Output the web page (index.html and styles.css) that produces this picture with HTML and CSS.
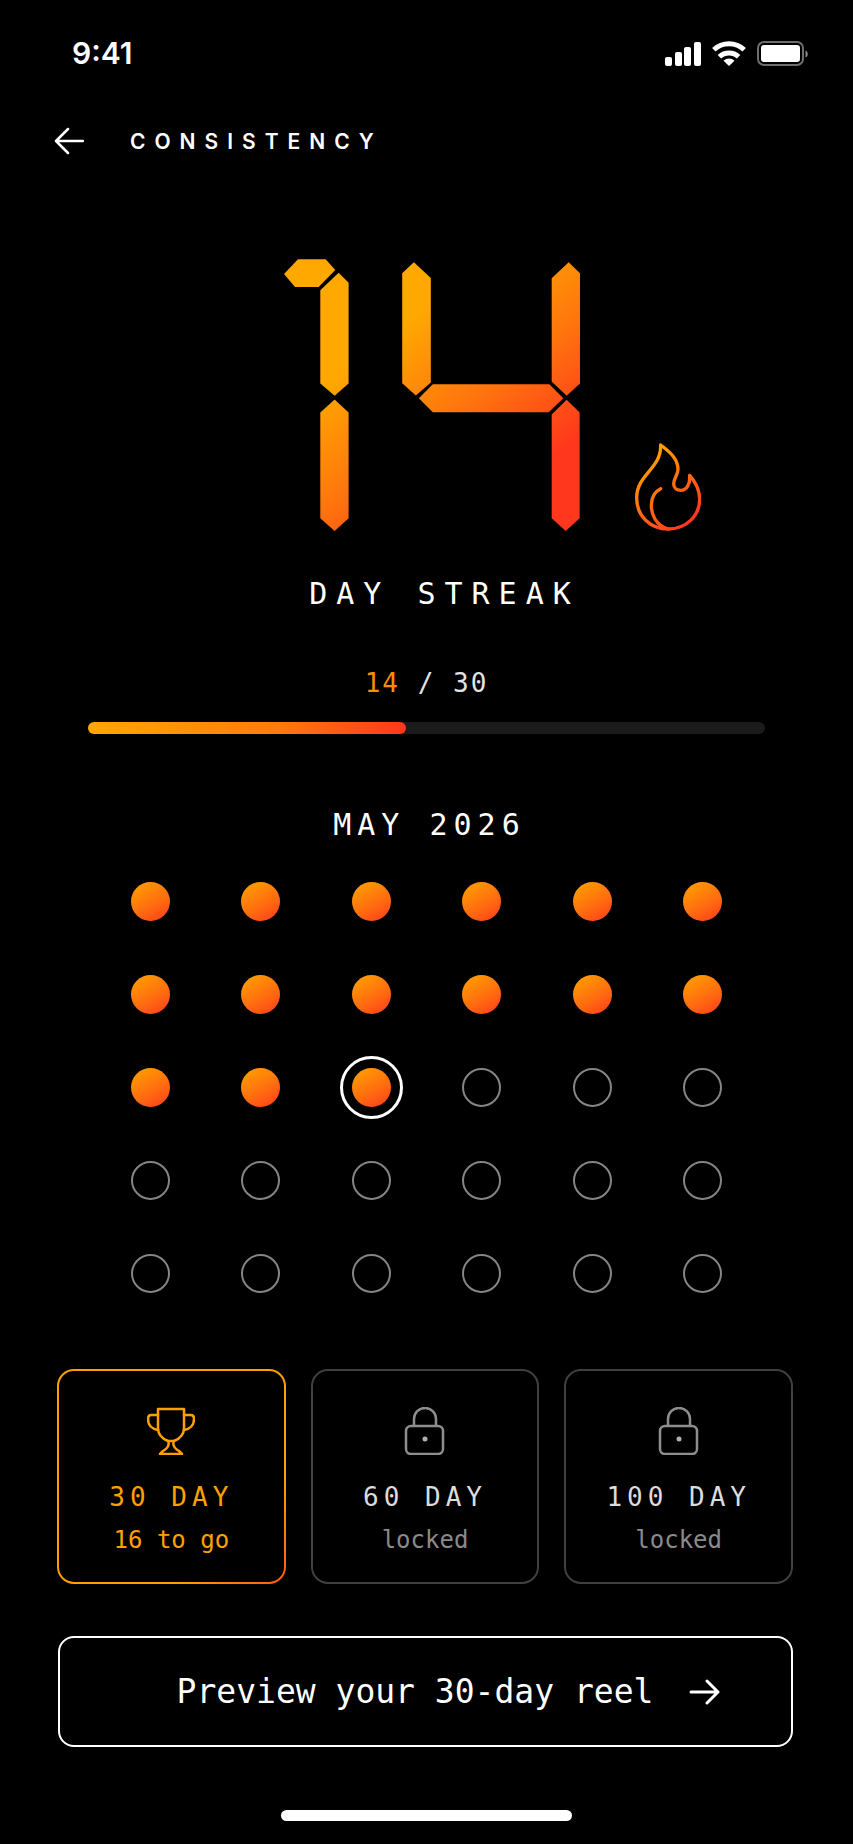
FILE: index.html
```
<!DOCTYPE html>
<html lang="en">
<head>
  <meta charset="UTF-8">
  <meta name="viewport" content="width=device-width, initial-scale=1">
  <title>Consistency</title>
  <link rel="stylesheet" href="styles.css">
</head>
<body>
  <div class="status-bar">
    <span class="status-time">9:41</span>
    <div class="status-icons">
      <svg width="36" height="25" viewBox="0 0 36 25" fill="#fff">
        <rect x="0" y="16" width="7" height="9" rx="2"/>
        <rect x="10" y="11" width="7" height="14" rx="2"/>
        <rect x="19" y="6" width="7" height="19" rx="2"/>
        <rect x="29" y="1" width="7" height="24" rx="2"/>
      </svg>
      <svg width="34" height="25" viewBox="0 0 34 25">
        <g fill="none" stroke="#fff" stroke-width="5">
          <path d="M1.800 8.800A22 22 0 0 1 32.200 8.800"/>
          <path d="M7.400 15.800A14 14 0 0 1 26.600 15.800"/>
        </g>
        <path d="M11.500 19.800a8 8 0 0 1 11 0L17 25z" fill="#fff"/>
      </svg>
      <svg class="battery" width="52" height="25" viewBox="0 0 52 25">
        <rect x="1" y="1" width="45" height="23" rx="6" fill="none" stroke="#6e6e6e" stroke-width="2"/>
        <rect x="4" y="4" width="39" height="17" rx="3" fill="#fff"/>
        <path d="M48.500 9.500c3 1 3 6 0 7z" fill="#8a8a8a"/>
      </svg>
    </div>
  </div>

  <header class="header">
    <button class="back-btn" aria-label="Back">
      <svg width="30" height="28" viewBox="0 0 30 28" fill="none" stroke="#fff" stroke-width="2.500" stroke-linecap="round" stroke-linejoin="round">
        <path d="M29 14H2M14 2L2 14l12 12"/>
      </svg>
    </button>
    <h1 class="title">CONSISTENCY</h1>
  </header>

  <main>
    <section class="hero">
      <svg class="digits" width="296" height="272" viewBox="72 56 889 817" role="img" aria-label="14">
        <defs>
          <linearGradient id="fire" gradientUnits="userSpaceOnUse" x1="330" y1="330" x2="680" y2="800">
            <stop offset="0" stop-color="#ffa800"/>
            <stop offset="0.500" stop-color="#ff760d"/>
            <stop offset="1" stop-color="#ff371c"/>
          </linearGradient>
        </defs>
        <g fill="url(#fire)">
          <path d="M72 101L114 57H197L226 89 176 140H105z"/>
          <path d="M181 150L236 97 266 127V430L224 467 181 430z"/>
          <path d="M181 517L224 478 266 517V835L224 873 181 835z"/>
          <path d="M427 99L462 66 513 113V427L468 466 427 429z"/>
          <path d="M477 474L519 432H869L911 474 867 516H519z"/>
          <path d="M876 114L927 66 961 99V430L921 467 876 424z"/>
          <path d="M876 523L921 479 960 517V835L918 873 876 835z"/>
        </g>
      </svg>
      <svg class="flame" width="66" height="88" viewBox="105 71 198 264" fill="none" stroke="url(#flame)" stroke-width="10" stroke-linecap="round" stroke-linejoin="round">
        <defs>
          <linearGradient id="flame" gradientUnits="userSpaceOnUse" x1="130" y1="130" x2="270" y2="300">
            <stop offset="0" stop-color="#ffa000"/>
            <stop offset="1" stop-color="#ff3a20"/>
          </linearGradient>
        </defs>
        <path d="M182 77C212 99 234 120 234 150C234 168 221 175 221 194C221 206 231 213 242 213C260 213 271 194 269 168C288 190 299 212 299 239C299 290 258 329 205 329C150 329 110 290 110 236C110 164 184 150 182 77z"/>
        <path d="M182 208C162 218 154 236 154 258C154 285 166 317 205 329"/>
      </svg>
    </section>
    <p class="streak-label">DAY STREAK</p>

    <section class="progress">
      <p class="progress-text"><span class="progress-current">14</span> / 30</p>
      <div class="progress-bar" role="progressbar" aria-label="Streak progress" aria-valuemin="0" aria-valuemax="30" aria-valuenow="14">
        <div class="progress-bar-inner" style="width: 47%"></div>
      </div>
    </section>

    <section class="calendar">
      <h2 class="month">MAY 2026</h2>
      <ol class="days">
        <li class="day done"></li><li class="day done"></li><li class="day done"></li>
        <li class="day done"></li><li class="day done"></li><li class="day done"></li>
        <li class="day done"></li><li class="day done"></li><li class="day done"></li>
        <li class="day done"></li><li class="day done"></li><li class="day done"></li>
        <li class="day done"></li><li class="day done"></li><li class="day done today"></li>
        <li class="day"></li><li class="day"></li><li class="day"></li>
        <li class="day"></li><li class="day"></li><li class="day"></li>
        <li class="day"></li><li class="day"></li><li class="day"></li>
        <li class="day"></li><li class="day"></li><li class="day"></li>
        <li class="day"></li><li class="day"></li><li class="day"></li>
      </ol>
    </section>

    <section class="milestones">
      <div class="milestone active">
        <svg width="48" height="48" viewBox="0 0 48 48" fill="none" stroke="#ffa000" stroke-width="2.500" stroke-linejoin="round" stroke-linecap="round">
          <path d="M11 2H37V21C37 28 32 32 27 34C25 38 28 42 32 44L35 47H13L16 44C20 42 23 38 21 34C16 32 11 28 11 21z"/>
          <path d="M11 8H4C1 8 1 10 1 12C1 18 5 22 11 23M37 8H44C47 8 47 10 47 12C47 18 43 22 37 23M21 34H27"/>
        </svg>
        <h3 class="milestone-name">30 DAY</h3>
        <p class="milestone-state">16 to go</p>
      </div>
      <div class="milestone">
        <svg width="48" height="48" viewBox="0 0 48 48" fill="none" stroke="#8e8e8e" stroke-width="2.500">
          <rect x="5" y="19" width="37" height="28" rx="5"/>
          <path d="M13 18V12a11 11 0 0 1 22 0V18"/>
          <circle cx="24" cy="32" r="2.500" fill="#b0b0b0" stroke="none"/>
        </svg>
        <h3 class="milestone-name">60 DAY</h3>
        <p class="milestone-state">locked</p>
      </div>
      <div class="milestone">
        <svg width="48" height="48" viewBox="0 0 48 48" fill="none" stroke="#8e8e8e" stroke-width="2.500">
          <rect x="5" y="19" width="37" height="28" rx="5"/>
          <path d="M13 18V12a11 11 0 0 1 22 0V18"/>
          <circle cx="24" cy="32" r="2.500" fill="#b0b0b0" stroke="none"/>
        </svg>
        <h3 class="milestone-name">100 DAY</h3>
        <p class="milestone-state">locked</p>
      </div>
    </section>

    <button class="preview-btn">
      Preview your 30-day reel
      <svg width="31" height="26" viewBox="0 0 31 26" fill="none" stroke="#fff" stroke-width="3" stroke-linecap="round" stroke-linejoin="round">
        <path d="M2 13H29M18 2L29 13 18 24"/>
      </svg>
    </button>
  </main>

  <div class="home-indicator"></div>
</body>
</html>
```
FILE: styles.css
```
* {
  box-sizing: border-box;
}

body {
  margin: 0;
  padding: 36px 0 22px;
  background: #000;
  color: #fff;
  font-family: "DejaVu Sans Mono", monospace;
}

h1, h2, h3, p, ol {
  margin: 0;
  padding: 0;
  font-weight: 400;
}

button {
  background: none;
  border: none;
  padding: 0;
  color: inherit;
  font-family: inherit;
  cursor: pointer;
}

svg {
  display: block;
  flex: none;
}

/* status bar */
.status-bar {
  display: flex;
  align-items: center;
  justify-content: space-between;
  padding: 0 44px 0 72px;
}

.status-time {
  font-family: Inter, sans-serif;
  font-size: 30px;
  line-height: 34px;
  font-weight: 600;
}

.status-icons {
  display: flex;
  gap: 11px;
}

/* header */
.header {
  display: flex;
  align-items: center;
  gap: 46px;
  height: 40px;
  margin-top: 51px;
  padding: 0 54px;
}

.title {
  font-family: Inter, sans-serif;
  font-size: 21px;
  font-weight: 600;
  letter-spacing: 9px;
}

/* streak */
.hero {
  display: grid;
  grid-template-columns: 1fr auto 1fr;
  align-items: end;
  column-gap: 55px;
  margin-top: 98px;
  padding-left: 10px;
}

.digits {
  grid-column: 2;
}

.streak-label {
  margin-top: 43px;
  padding-left: 36px;
  font-size: 30px;
  line-height: 40px;
  letter-spacing: 9px;
  text-align: center;
}

/* progress */
.progress {
  margin-top: 53px;
  padding: 0 88px;
}

.progress-text {
  font-size: 26px;
  line-height: 32px;
  letter-spacing: 2px;
  color: #e4e4e4;
  text-align: center;
}

.progress-current {
  color: #ff8c00;
}

.progress-bar {
  height: 12px;
  margin-top: 23px;
  border-radius: 6px;
  background: #1b1b1b;
}

.progress-bar-inner {
  height: 100%;
  border-radius: 6px;
  background: linear-gradient(90deg, #ffa800, #ff7a0c 60%, #ff371c);
}

/* calendar */
.calendar {
  margin-top: 71px;
  padding: 0 95px;
}

.month {
  padding-left: 6px;
  font-size: 30px;
  line-height: 40px;
  letter-spacing: 6px;
  text-align: center;
}

.days {
  display: grid;
  grid-template-columns: repeat(6, 1fr);
  grid-auto-rows: 93px;
  place-items: center;
  margin-top: 10px;
  list-style: none;
}

.day {
  width: 39px;
  height: 39px;
  border: 2px solid #858585;
  border-radius: 50%;
}

.done {
  border: none;
  background: linear-gradient(150deg, #ffa000 5%, #ff6a10 60%, #ff3a1c);
}

.today {
  outline: 3px solid #fff;
  outline-offset: 9px;
}

/* milestones */
.milestones {
  display: grid;
  grid-template-columns: repeat(3, 1fr);
  gap: 25px;
  margin-top: 49px;
  padding: 0 60px 0 57px;
}

.milestone {
  display: flex;
  flex-direction: column;
  align-items: center;
  padding: 36px 0 26px;
  border: 2px solid #404040;
  border-radius: 17px;
}

.milestone-name {
  margin-top: 26px;
  font-size: 26px;
  line-height: 32px;
  letter-spacing: 5px;
  color: #dcdcdc;
}

.milestone-state {
  margin-top: 11px;
  font-size: 24px;
  line-height: 32px;
  color: #8a8a8a;
}

.active {
  border-color: transparent;
  background: linear-gradient(#000, #000) padding-box,
    linear-gradient(135deg, #ffa000 75%, #ff5a14) border-box;
}

.active .milestone-name,
.active .milestone-state {
  color: #ffa000;
}

/* preview button */
.preview-btn {
  display: flex;
  align-items: center;
  justify-content: center;
  gap: 36px;
  width: calc(100% - 118px);
  height: 111px;
  margin: 52px 60px 0 58px;
  padding-left: 46px;
  border: 2px solid #fff;
  border-radius: 16px;
  font-size: 33px;
}

.home-indicator {
  width: 34%;
  height: 11px;
  margin: 63px auto 0;
  border-radius: 6px;
  background: #fff;
}
```
